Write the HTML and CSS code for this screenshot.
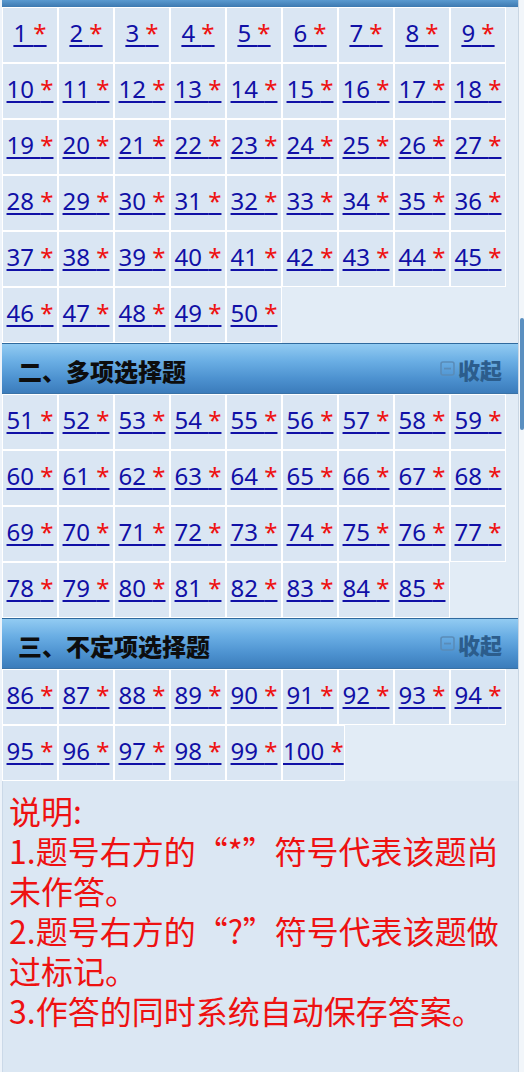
FILE: index.html
```html
<!DOCTYPE html>
<html lang="zh">
<head>
<meta charset="utf-8">
<title>答题卡</title>
<link rel="stylesheet" href="styles.css">
</head>
<body>
<div class="page">
  <div class="panel">
    <div class="topbar"></div>
    <div class="grid" id="g1"></div>
    <div class="head"><span class="title">二、多项选择题</span><span class="fold"><svg class="ico" width="15" height="15" viewBox="0 0 15 15"><rect x="1" y="1" width="13" height="13" rx="2" fill="none" stroke="#5a8cb8" stroke-width="1.6"/><rect x="4" y="6.7" width="7" height="1.8" fill="#5a8cb8"/></svg>收起</span></div>
    <div class="grid" id="g2"></div>
    <div class="head"><span class="title">三、不定项选择题</span><span class="fold"><svg class="ico" width="15" height="15" viewBox="0 0 15 15"><rect x="1" y="1" width="13" height="13" rx="2" fill="none" stroke="#5a8cb8" stroke-width="1.6"/><rect x="4" y="6.7" width="7" height="1.8" fill="#5a8cb8"/></svg>收起</span></div>
    <div class="grid" id="g3"></div>
    <div class="note">说明:<br>1.题号右方的“*”符号代表该题尚未作答。<br>2.题号右方的“?”符号代表该题做过标记。<br>3.作答的同时系统自动保存答案。</div>
  </div>
  <div class="scroll"><div class="track-top"></div><div class="thumb"></div><div class="track-rest"></div></div>
</div>
<script>
function fill(id, a, b) {
  var g = document.getElementById(id);
  for (var i = a; i <= b; i++) {
    var c = document.createElement('div');
    c.className = 'cell';
    c.innerHTML = '<a href="#">' + i + ' <span class="star">*</span></a>';
    g.appendChild(c);
  }
}
fill('g1', 1, 50);
fill('g2', 51, 85);
fill('g3', 86, 100);
</script>
</body>
</html>
```
FILE: styles.css
```css
html, body {
  margin: 0;
  padding: 0;
}
body {
  background: #edf3fa;
  font-family: "Noto Sans", "Noto Sans CJK SC", sans-serif;
}
.page {
  display: flex;
  width: 524px;
  height: 1072px;
  overflow: hidden;
}
.panel {
  margin-left: 2px;
  width: 517px;
  background: #e2ecf6;
  display: flex;
  flex-direction: column;
}
.topbar {
  height: 7px;
  background: linear-gradient(#5a9ad0, #3d79b0);
}
.grid {
  display: flex;
  flex-wrap: wrap;
  width: 504px;
}
.cell {
  box-sizing: border-box;
  min-width: 56px;
  height: 56px;
  border: 1px solid #ffffff;
  background: #dae6f3;
  display: flex;
  align-items: center;
  justify-content: center;
  white-space: nowrap;
  padding-bottom: 4px;
}
.cell a {
  font-size: 24px;
  line-height: 30px;
  color: #1010a6;
  text-decoration: underline;
  text-decoration-thickness: 2px;
  text-underline-offset: 3px;
}
.cell .star {
  color: #ee1111;
}
.head {
  box-sizing: border-box;
  height: 51px;
  border-top: 1px solid #2f6a9e;
  border-bottom: 1px solid #3a72a6;
  background: linear-gradient(#92cbf2 0%, #6aaee4 35%, #4d92d0 70%, #3b7cbb 100%);
  display: flex;
  align-items: center;
  justify-content: space-between;
  padding: 4px 16px 0 16px;
}
.title {
  font-family: "Noto Sans CJK SC", sans-serif;
  font-weight: 900;
  font-size: 24px;
  color: #0d0d0d;
}
.fold {
  display: flex;
  align-items: center;
  font-family: "Noto Sans CJK SC", sans-serif;
  font-weight: 900;
  font-size: 22px;
  color: #2c5d8c;
  margin-top: -4px;
}
.ico {
  margin-right: 3px;
}
.note {
  flex: 1;
  background: #dbe7f3;
  border-left: 1px solid #cbd9e8;
  padding: 9px 0 0 6px;
  font-family: "Noto Sans CJK SC", sans-serif;
  font-size: 32px;
  line-height: 40px;
  color: #ee1111;
}
.scroll {
  width: 5px;
  display: flex;
  flex-direction: column;
  border-left: 1px solid #c9d6e3;
  background: #f2f6fa;
}
.track-top {
  height: 318px;
}
.thumb {
  height: 112px;
  margin-left: 1px;
  background: #5a8fc0;
  border-radius: 2px;
}
.track-rest {
  flex: 1;
}
```
